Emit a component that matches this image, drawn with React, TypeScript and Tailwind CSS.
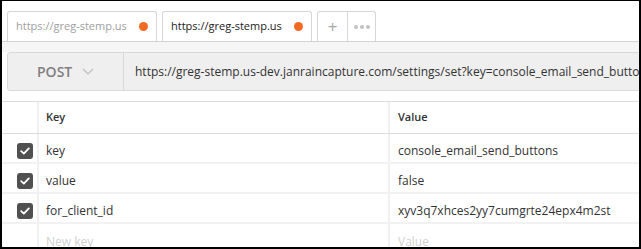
import React from 'react';

const rows = [
  { key: 'key', value: 'console_email_send_buttons' },
  { key: 'value', value: 'false' },
  { key: 'for_client_id', value: 'xyv3q7xhces2yy7cumgrte24epx4m2st' },
];

function Check() {
  return (
    <div className="w-4 h-4 rounded-[3px] bg-[#505050] flex items-center justify-center">
      <svg width="10" height="8" viewBox="0 0 10 8" fill="none">
        <path d="M1.2 4.2 L3.8 6.6 L8.8 1.4" stroke="white" strokeWidth="1.8" strokeLinecap="round" strokeLinejoin="round" />
      </svg>
    </div>
  );
}

function Tab({ active }: { active?: boolean }) {
  return (
    <div className="w-[150px] h-[30px] border border-b-0 border-[#d6d6d6] rounded-t-[3px] bg-white flex items-center pl-2 pr-[8px]">
      <span className={`flex-1 min-w-0 whitespace-nowrap text-[11px] ${active ? 'text-[#222]' : 'text-[#a0a0a0]'}`}>https://greg-stemp.us</span>
      <span className="w-[9px] h-[9px] shrink-0 rounded-full bg-[#f26b21]" />
    </div>
  );
}

export default function App() {
  return (
    <div
      className="w-[641px] h-[249px] overflow-hidden bg-white border-black border-l-2 border-r-2 border-t border-b-2"
      style={{ fontFamily: '"Open Sans", "Liberation Sans", sans-serif' }}
    >
      {/* tab strip */}
      <div className="h-[41px] pl-[5px] flex items-end gap-[5px] border-b border-[#d4d4d4]">
        <Tab />
        <Tab active />
        <div className="h-[30px] flex border border-b-0 border-[#d6d6d6] rounded-t-[3px]">
          <div className="w-[30px] flex items-center justify-center border-r border-[#d6d6d6] text-[#a8a8a8] text-[17px] leading-none">+</div>
          <div className="w-[27px] flex items-center justify-center gap-[2px]">
            <span className="w-[4px] h-[4px] rounded-full bg-[#c2c2c2]" />
            <span className="w-[4px] h-[4px] rounded-full bg-[#c2c2c2]" />
            <span className="w-[4px] h-[4px] rounded-full bg-[#c2c2c2]" />
          </div>
        </div>
      </div>

      <div className="h-[10px] bg-[#f6f6f6]" />

      {/* request bar */}
      <div className="pl-[5px]">
        <div className="w-[700px] h-[39px] flex bg-[#efefef] border border-[#d9d9d9] rounded-[3px]">
          <div className="w-[116px] flex items-center pl-[29px] border-r border-[#d9d9d9]">
            <span className="text-[14px] font-semibold text-[#808080]">POST</span>
            <svg className="ml-[10px]" width="12" height="7" viewBox="0 0 12 7" fill="none">
              <path d="M1 1 L6 6 L11 1" stroke="#bdbdbd" strokeWidth="1.2" />
            </svg>
          </div>
          <div className="flex-1 flex items-center pl-[11px] whitespace-nowrap text-[12px] text-[#333]">
            https://greg-stemp.us-dev.janraincapture.com/settings/set?key=console_email_send_buttons
          </div>
        </div>
      </div>

      {/* params table */}
      <div className="mt-[10px]">
        <div className="h-[33px] flex border-t border-b border-[#dcdcdc]">
          <div className="w-[37px] border-r-2 border-[#f0f0f0]" />
          <div className="w-[351px] flex items-center pl-[7px] text-[11px] font-semibold text-[#333] border-r-2 border-[#f0f0f0]">Key</div>
          <div className="flex-1 flex items-center pl-[8px] text-[11px] font-semibold text-[#333]">Value</div>
        </div>
        {rows.map((r) => (
          <div key={r.key} className="h-[30px] flex border-b-2 border-[#f2f2f2] text-[12px] text-[#333]">
            <div className="w-[37px] flex items-center pt-[5px] pl-[15px] border-r-2 border-[#f0f0f0]">
              <Check />
            </div>
            <div className="w-[351px] flex items-center pt-[5px] pl-[7px] border-r-2 border-[#f0f0f0]">{r.key}</div>
            <div className="flex-1 flex items-center pt-[5px] pl-[8px]">{r.value}</div>
          </div>
        ))}
        <div className="h-[30px] flex text-[12px] text-[#cfcfcf]">
          <div className="w-[37px] border-r-2 border-[#f0f0f0]" />
          <div className="w-[351px] flex items-center pt-[5px] pl-[7px] border-r-2 border-[#f0f0f0]">New key</div>
          <div className="flex-1 flex items-center pt-[5px] pl-[8px]">Value</div>
        </div>
      </div>
    </div>
  );
}
